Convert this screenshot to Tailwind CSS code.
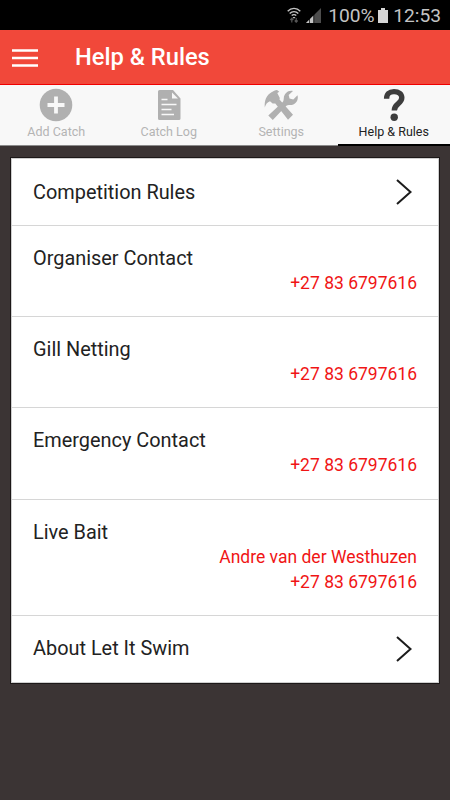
<!DOCTYPE html>
<html lang="en">
<head>
    <meta charset="UTF-8">
    <meta name="viewport" content="width=device-width, initial-scale=1.0">
    <title>Help &amp; Rules</title>
    <script src="https://cdn.jsdelivr.net/npm/@tailwindcss/browser@4"></script>
</head>
<body class="bg-[#3b3434] h-[800px] overflow-hidden font-[Roboto,sans-serif]">
    <!-- Status bar -->
    <div class="h-[30px] bg-black flex items-center justify-end pr-[9px] text-[#c4c4c4]">
        <svg class="w-[14px] h-[16px] mr-[5px]" viewBox="0 0 14 16" fill="none" stroke="#c4c4c4" stroke-width="1.4">
            <path d="M.7 4.2C4.2.4 9.800.4 13.300 4.200M2.700 6.500c2.400-2.500 6.200-2.500 8.600 0M4.700 8.600c1.300-1.300 3.300-1.300 4.600 0"/>
            <path d="M5.500 10h3L7 11.700z" fill="#c4c4c4" stroke="none"/>
            <path d="M4.800 15.500v-4M3.300 13l1.500-1.700L6.300 13M9.200 11v4M7.700 13.500l1.500 1.700 1.500-1.700" stroke="#555" stroke-width="1.200"/>
        </svg>
        <svg class="w-[15px] h-[15px] mr-[7px]" viewBox="0 0 15 15">
            <path d="M0 15L15 0v15z" fill="#4d4d4d"/>
            <path d="M0 15L7.500 7.500V15z" fill="#c4c4c4"/>
            <path d="M3.500 9v6M7.800 5v10" stroke="#000" stroke-width=".7"/>
        </svg>
        <span class="pt-[2px] text-[19.200px] leading-[30px] w-[45px] whitespace-nowrap">100%</span>
        <svg class="w-[10px] h-[15px] ml-[5px] mr-[5px]" viewBox="0 0 10 15" fill="#d6d6d6">
            <path d="M3 0h4v2h3v13H0V2h3z"/>
        </svg>
        <span class="pt-[2px] text-[19.200px] leading-[30px] whitespace-nowrap">12:53</span>
    </div>

    <!-- App bar -->
    <header class="h-[55px] bg-[#f1483a] border-b border-[#f00000] flex items-center pl-3">
        <svg class="w-[26px] h-[20px] mt-px" viewBox="0 0 26 20" stroke="#fff" stroke-width="2.600">
            <path d="M0 2.500h26M0 10h26M0 17.500h26"/>
        </svg>
        <h1 class="ml-[37px] pt-px text-[23.700px] leading-[53px] font-medium text-white">Help &amp; Rules</h1>
    </header>

    <!-- Tabs -->
    <nav class="h-[61px] bg-[#f8f8f8] grid grid-cols-4 text-[12.500px] leading-[16px] text-[#b4b4b4]">
        <div class="flex flex-col items-center pt-[3px] border-b border-[#8a8a8a]">
            <svg class="w-[34px] h-[34px]" viewBox="0 0 34 34">
                <circle cx="17" cy="17" r="16.300" fill="#b0b0b0"/>
                <path d="M17 8.500v17M8.500 17h17" stroke="#f8f8f8" stroke-width="3.800"/>
            </svg>
            <span class="mt-[2px]">Add Catch</span>
        </div>
        <div class="flex flex-col items-center pt-[3px] border-b border-[#8a8a8a]">
            <svg class="w-[24px] h-[34px]" viewBox="0 0 24 34">
                <path d="M2.500 2h13.500l7.500 8.500V30.500a1.500 1.500 0 0 1-1.500 1.500H2.500A1.500 1.500 0 0 1 1 30.500v-27A1.500 1.500 0 0 1 2.500 2z" fill="#b0b0b0"/>
                <path d="M15 4.500v6h6z" fill="#f8f8f8"/>
                <path d="M4.500 11.500h6M4.500 16.500h15M4.500 21.500h10M4.500 26.500h12.500" stroke="#f8f8f8" stroke-width="1.300"/>
            </svg>
            <span class="mt-[2px]">Catch Log</span>
        </div>
        <div class="flex flex-col items-center pt-[3px] border-b border-[#8a8a8a]">
            <svg class="w-[34px] h-[34px]" viewBox="0 0 34 34" fill="#b0b0b0">
                <!-- wrench -->
                <path d="M4.300 27.500L18.500 14.200c1-1.200 1.200-2.500 1.300-4.300.3-4.500 4.500-8.300 9.200-7l-4.300 4 .8 3.600 3.800 1 4.200-4.300c1.400 5-2 9.700-7.200 9.900-2 0-3.500.3-5 1.700L8.800 32z"/>
                <!-- hammer -->
                <path d="M.8 19.500C.2 12.500 2.500 7 7.500 4.200c2-1.200 3.500-2 5.500-2.200l2.300 1.800-2 1.200 2.500 5-.3 1.500L29 26.800l-5 4.900L11.300 15.500l-2.700.1-2.600-2.400C3.200 14 1.600 16.500.8 19.500z"/>
            </svg>
            <span class="mt-[2px]">Settings</span>
        </div>
        <div class="flex flex-col items-center pt-[3px] border-b-2 border-black text-[#222]">
            <svg class="w-[24px] h-[34px]" viewBox="0 0 24 34">
                <path d="M4.600 10.800C4.600 6 7.200 3.600 12 3.600c4.800 0 7.800 2.500 7.800 6.200 0 6-7.500 5.700-7.500 12.700" fill="none" stroke="#3d3d3d" stroke-width="5.400"/>
                <circle cx="12.200" cy="29.300" r="3.700" fill="#3d3d3d"/>
            </svg>
            <span class="mt-[2px]">Help &amp; Rules</span>
        </div>
    </nav>

    <!-- Contact list -->
    <main class="mt-3 mx-[11px] bg-white border border-[#cfcfcf] shadow-[0_0_0_1px_#1c1818] divide-y divide-[#d6d6d6] text-[19.900px] leading-[25px] text-[#222]">
        <div class="h-[67px] pl-[21px] pr-[26px] flex items-center justify-between">
            <span>Competition Rules</span>
            <svg class="w-[16px] h-[26px]" viewBox="0 0 16 26" fill="none" stroke="#1c1c1c" stroke-width="2">
                <path d="M1 1l13.500 12L1 25"/>
            </svg>
        </div>
        <div class="h-[91px] px-[21px] pt-5">
            <p>Organiser Contact</p>
            <p class="text-right text-[17.500px] leading-[25px] text-[#f01515]">+27 83 6797616</p>
        </div>
        <div class="h-[91px] px-[21px] pt-5">
            <p>Gill Netting</p>
            <p class="text-right text-[17.500px] leading-[25px] text-[#f01515]">+27 83 6797616</p>
        </div>
        <div class="h-[92px] px-[21px] pt-5">
            <p>Emergency Contact</p>
            <p class="text-right text-[17.500px] leading-[25px] text-[#f01515]">+27 83 6797616</p>
        </div>
        <div class="h-[116px] px-[21px] pt-5">
            <p>Live Bait</p>
            <p class="text-right text-[17.500px] leading-[25px] text-[#f01515]">Andre van der Westhuzen</p>
            <p class="text-right text-[17.500px] leading-[25px] text-[#f01515]">+27 83 6797616</p>
        </div>
        <div class="h-[66px] pl-[21px] pr-[26px] pb-px flex items-center justify-between">
            <span>About Let It Swim</span>
            <svg class="w-[16px] h-[26px]" viewBox="0 0 16 26" fill="none" stroke="#1c1c1c" stroke-width="2">
                <path d="M1 1l13.500 12L1 25"/>
            </svg>
        </div>
    </main>
</body>
</html>
